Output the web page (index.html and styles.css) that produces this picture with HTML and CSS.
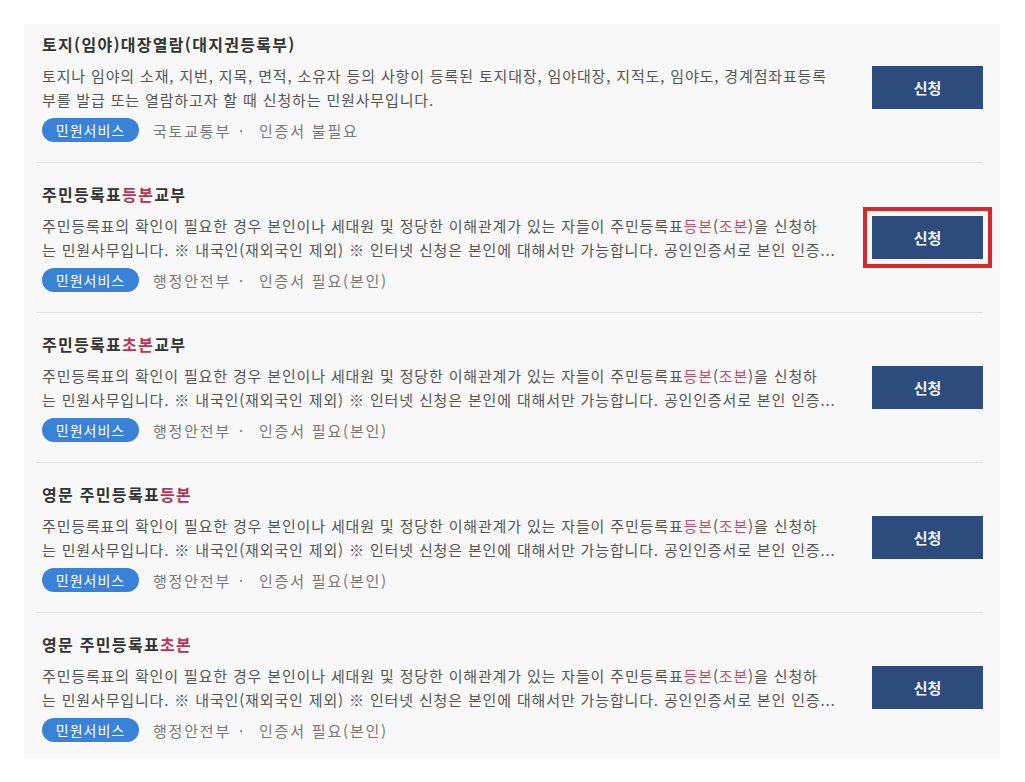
FILE: index.html
```html
<!DOCTYPE html>
<html lang="ko">
<head>
<meta charset="utf-8">
<title>민원서비스 목록</title>
<link rel="stylesheet" href="styles.css">
</head>
<body>
<div class="panel">
  <div class="row">
    <div class="info">
      <div class="title">토지(임야)대장열람(대지권등록부)</div>
      <div class="desc">
        <span class="line">토지나 임야의 소재, 지번, 지목, 면적, 소유자 등의 사항이 등록된 토지대장, 임야대장, 지적도, 임야도, 경계점좌표등록</span>
        <span class="line">부를 발급 또는 열람하고자 할 때 신청하는 민원사무입니다.</span>
      </div>
      <div class="meta"><span class="badge">민원서비스</span><span class="org">국토교통부</span><span class="dot">·</span><span class="cert">인증서 불필요</span></div>
    </div>
    <button class="apply">신청</button>
  </div>
  <div class="row">
    <div class="info">
      <div class="title">주민등록표<em>등본</em>교부</div>
      <div class="desc">
        <span class="line">주민등록표의 확인이 필요한 경우 본인이나 세대원 및 정당한 이해관계가 있는 자들이 주민등록표<em>등본</em>(<em>조본</em>)을 신청하</span>
        <span class="line">는 민원사무입니다. ※ 내국인(재외국인 제외) ※ 인터넷 신청은 본인에 대해서만 가능합니다. 공인인증서로 본인 인증...</span>
      </div>
      <div class="meta"><span class="badge">민원서비스</span><span class="org">행정안전부</span><span class="dot">·</span><span class="cert">인증서 필요(본인)</span></div>
    </div>
    <button class="apply highlighted">신청</button>
  </div>
  <div class="row">
    <div class="info">
      <div class="title">주민등록표<em>초본</em>교부</div>
      <div class="desc">
        <span class="line">주민등록표의 확인이 필요한 경우 본인이나 세대원 및 정당한 이해관계가 있는 자들이 주민등록표<em>등본</em>(<em>조본</em>)을 신청하</span>
        <span class="line">는 민원사무입니다. ※ 내국인(재외국인 제외) ※ 인터넷 신청은 본인에 대해서만 가능합니다. 공인인증서로 본인 인증...</span>
      </div>
      <div class="meta"><span class="badge">민원서비스</span><span class="org">행정안전부</span><span class="dot">·</span><span class="cert">인증서 필요(본인)</span></div>
    </div>
    <button class="apply">신청</button>
  </div>
  <div class="row">
    <div class="info">
      <div class="title">영문 주민등록표<em>등본</em></div>
      <div class="desc">
        <span class="line">주민등록표의 확인이 필요한 경우 본인이나 세대원 및 정당한 이해관계가 있는 자들이 주민등록표<em>등본</em>(<em>조본</em>)을 신청하</span>
        <span class="line">는 민원사무입니다. ※ 내국인(재외국인 제외) ※ 인터넷 신청은 본인에 대해서만 가능합니다. 공인인증서로 본인 인증...</span>
      </div>
      <div class="meta"><span class="badge">민원서비스</span><span class="org">행정안전부</span><span class="dot">·</span><span class="cert">인증서 필요(본인)</span></div>
    </div>
    <button class="apply">신청</button>
  </div>
  <div class="row">
    <div class="info">
      <div class="title">영문 주민등록표<em>초본</em></div>
      <div class="desc">
        <span class="line">주민등록표의 확인이 필요한 경우 본인이나 세대원 및 정당한 이해관계가 있는 자들이 주민등록표<em>등본</em>(<em>조본</em>)을 신청하</span>
        <span class="line">는 민원사무입니다. ※ 내국인(재외국인 제외) ※ 인터넷 신청은 본인에 대해서만 가능합니다. 공인인증서로 본인 인증...</span>
      </div>
      <div class="meta"><span class="badge">민원서비스</span><span class="org">행정안전부</span><span class="dot">·</span><span class="cert">인증서 필요(본인)</span></div>
    </div>
    <button class="apply">신청</button>
  </div>
</div>
</body>
</html>
```
FILE: styles.css
```css
html, body {
  margin: 0;
  padding: 0;
  background: #ffffff;
}
body {
  font-family: "Noto Sans CJK KR", "Noto Sans", sans-serif;
  color: #555;
}
.panel {
  margin: 24px 25px 0 24px;
  width: 976px;
  background: #f8f8f8;
}
.row {
  display: flex;
  align-items: center;
  margin: 0 17px 0 12px;
  padding: 20px 0 20px 6px;
  border-bottom: 1px solid #e4e4e4;
}
.row:first-child {
  padding-top: 9px;
}
.row:last-child {
  border-bottom: none;
  padding-bottom: 17px;
}
.info {
  flex: 1;
  min-width: 0;
}
.title {
  font-size: 16px;
  line-height: 22px;
  font-weight: 700;
  color: #333;
  letter-spacing: 1.3px;
}
.title em {
  font-style: normal;
  color: #b83351;
}
.desc {
  margin-top: 9px;
  font-size: 15px;
  line-height: 24px;
  color: #555;
  letter-spacing: 0.85px;
}
.desc .line {
  display: block;
  white-space: nowrap;
}
.desc em {
  font-style: normal;
  color: #c2506a;
}
.meta {
  margin-top: 6px;
  display: flex;
  align-items: center;
  height: 24px;
  font-size: 15px;
  color: #777;
  letter-spacing: 1.8px;
}
.badge {
  display: inline-flex;
  align-items: center;
  justify-content: center;
  width: 97px;
  height: 24px;
  border-radius: 12px;
  background: #3a82d8;
  color: #fff;
  font-size: 14px;
  letter-spacing: 1px;
  margin-right: 14px;
}
.dot {
  margin: 0 14px 0 8px;
}
.apply {
  flex: none;
  width: 111px;
  height: 43px;
  border: none;
  background: #2e4b7d;
  color: #eef2f8;
  font-family: "Noto Sans CJK KR", "Noto Sans", sans-serif;
  font-size: 15px;
  font-weight: 700;
  margin-left: 36px;
  padding: 0;
  cursor: pointer;
}
.apply.highlighted {
  outline: 4px solid #d42a2e;
  outline-offset: 5px;
}
```
